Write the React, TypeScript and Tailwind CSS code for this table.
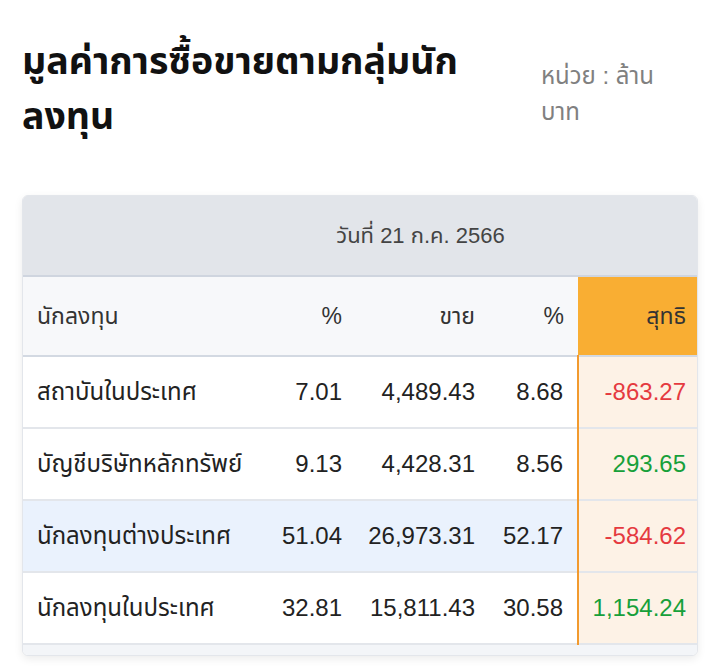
import React from 'react';

type Row = {
  name: string;
  pct1: string;
  sell: string;
  pct2: string;
  net: string;
  highlight?: boolean;
};

const rows: Row[] = [
  { name: 'สถาบันในประเทศ', pct1: '7.01', sell: '4,489.43', pct2: '8.68', net: '-863.27' },
  { name: 'บัญชีบริษัทหลักทรัพย์', pct1: '9.13', sell: '4,428.31', pct2: '8.56', net: '293.65' },
  { name: 'นักลงทุนต่างประเทศ', pct1: '51.04', sell: '26,973.31', pct2: '52.17', net: '-584.62', highlight: true },
  { name: 'นักลงทุนในประเทศ', pct1: '32.81', sell: '15,811.43', pct2: '30.58', net: '1,154.24' },
];

const font = { fontFamily: '"Liberation Sans", "Noto Sans Thai", "Noto Sans", sans-serif' };

export default function App() {
  return (
    <div className="min-h-[672px] bg-white px-[22px] pt-[34px] text-[#222]" style={font}>
      <div className="flex items-start justify-between">
        <h1 className="w-[480px] text-[37.5px] font-bold leading-[55px] text-[#111]">
          มูลค่าการซื้อขายตามกลุ่มนักลงทุน
        </h1>
        <div className="mt-[24px] w-[157px]">
          <div className="w-[130px] text-[24px] leading-[36px] text-[#808080]">หน่วย : ล้าน บาท</div>
        </div>
      </div>

      <div className="mt-[51px] overflow-hidden rounded-md border border-[#e3e6eb] bg-white shadow-[0_3px_8px_rgba(0,0,0,0.08)]">
        <table className="w-full table-fixed border-collapse">
          <colgroup>
            <col className="w-[240px]" />
            <col className="w-[93px]" />
            <col className="w-[133px]" />
            <col className="w-[89px]" />
            <col className="w-[121px]" />
          </colgroup>
          <thead>
            <tr className="h-[80px] border-b-2 border-[#cfd5df] bg-[#e2e5ea]">
              <th className="relative z-10 bg-[#e2e5ea] shadow-[6px_0_8px_-4px_rgba(0,0,0,0.07)]" />
              <th colSpan={3} className="text-center text-[22px] font-normal text-[#444]">
                วันที่ 21 ก.ค. 2566
              </th>
              <th />
            </tr>
            <tr className="h-[80px] border-b-2 border-[#d3d9e2] bg-[#f7f8fa] text-[23px] text-[#333]">
              <th className="relative z-10 bg-[#f7f8fa] pl-[14px] text-left font-normal shadow-[6px_0_8px_-4px_rgba(0,0,0,0.07)]">
                นักลงทุน
              </th>
              <th className="pr-[14px] text-right font-normal">%</th>
              <th className="pr-[14px] text-right font-normal">ขาย</th>
              <th className="pr-[14px] text-right font-normal">%</th>
              <th className="bg-[#f9ae33] pr-[13px] text-right font-normal">สุทธิ</th>
            </tr>
          </thead>
          <tbody className="text-[24px]">
            {rows.map((r) => {
              const bg = r.highlight ? 'bg-[#eaf2fd]' : 'bg-white';
              const neg = r.net.startsWith('-');
              return (
                <tr key={r.name} className={`h-[72px] border-b-2 border-[#e3e6eb] ${bg}`}>
                  <td className={`relative z-10 whitespace-nowrap pl-[14px] shadow-[6px_0_8px_-4px_rgba(0,0,0,0.07)] ${bg}`}>
                    {r.name}
                  </td>
                  <td className="pr-[14px] text-right">{r.pct1}</td>
                  <td className="pr-[14px] text-right">{r.sell}</td>
                  <td className="pr-[14px] text-right">{r.pct2}</td>
                  <td
                    className={`border-l-2 border-l-[#f29a2e] bg-[#fdf2e6] pr-[13px] text-right ${
                      neg ? 'text-[#e53a3f]' : 'text-[#17a03a]'
                    }`}
                  >
                    {r.net}
                  </td>
                </tr>
              );
            })}
          </tbody>
        </table>
        <div className="h-[10px] bg-[#f3f5f8]" />
      </div>
    </div>
  );
}
